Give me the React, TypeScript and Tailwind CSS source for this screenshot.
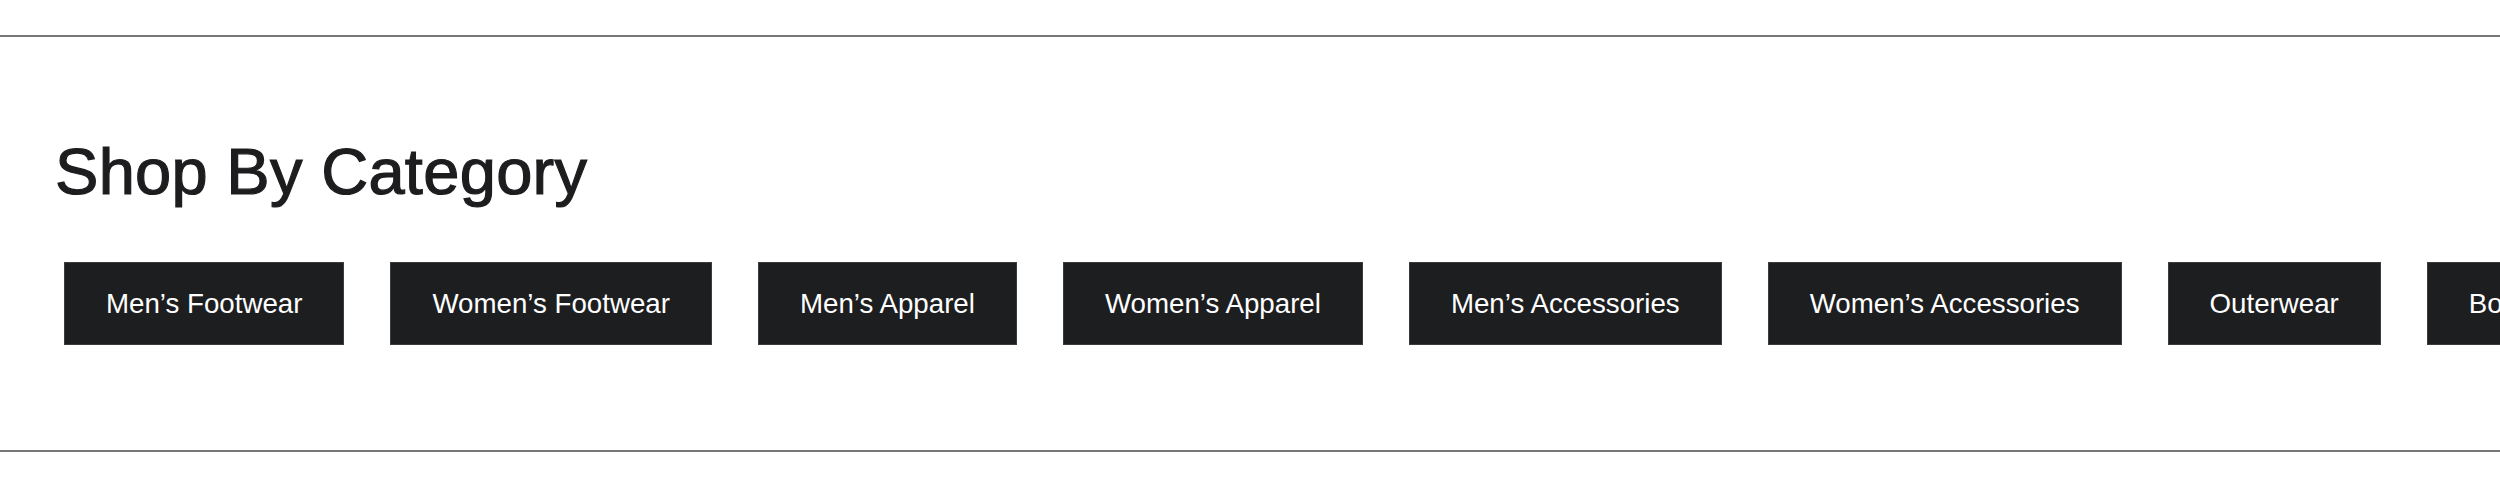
import React from 'react';

const categories = [
    "Men’s Footwear",
    "Women’s Footwear",
    "Men’s Apparel",
    "Women’s Apparel",
    "Men’s Accessories",
    "Women’s Accessories",
    "Outerwear",
    "Boots",
];

const App: React.FC = () => {
    return (
        <div className="w-[2500px] h-[487px] bg-white overflow-hidden" style={{ fontFamily: '"Liberation Sans", Arial, Helvetica, sans-serif' }}>
            <section className="mt-[35px] border-y-2 border-[#777777] pt-[103px] pb-[105px]">
                <h2 className="pl-[55px] text-[65px] leading-[64px] tracking-[0.3px] text-[#1d1d1f] [-webkit-text-stroke:1.2px_#1d1d1f]">
                    Shop By Category
                </h2>
                <div className="mt-[58px] pl-[64px] flex gap-[46px] overflow-hidden whitespace-nowrap">
                    {categories.map((name) => (
                        <button
                            key={name}
                            className="shrink-0 h-[83px] px-[41px] flex items-center justify-center bg-[#1d1e20] border border-[#3a3b3d] text-white text-[27.7px] leading-none"
                        >
                            {name}
                        </button>
                    ))}
                </div>
            </section>
        </div>
    );
};

export default App;
